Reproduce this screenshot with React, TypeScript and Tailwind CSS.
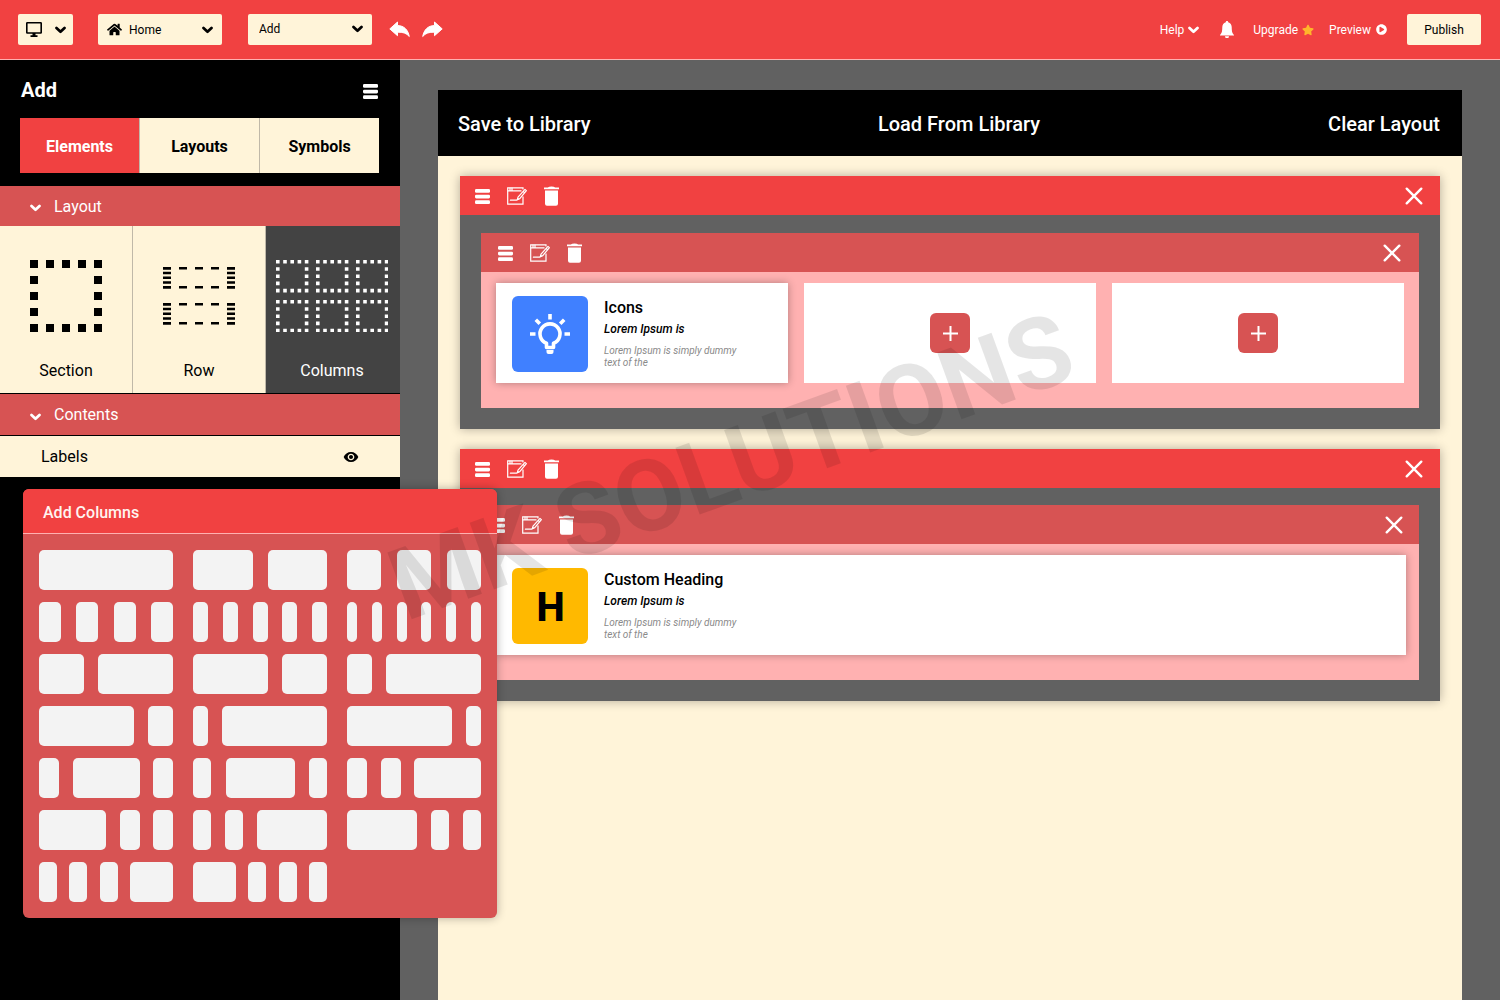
import { useState } from 'react'
import type { ReactNode } from 'react'
import { FaHome, FaPlayCircle, FaStar } from 'react-icons/fa'
import { MdVisibility } from 'react-icons/md'
import { clsx } from 'clsx'

const TABS = ['Elements', 'Layouts', 'Symbols']

// Each preset is a list of block widths, spread over one 134px cell
const COLUMN_PRESETS: number[][] = [
  [134],
  [60, 59],
  [34, 34, 34],
  [22, 22, 22, 22],
  [15, 15, 15, 15, 15],
  [10, 10, 10, 10, 10, 10],
  [45, 75],
  [75, 45],
  [25, 95],
  [95, 25],
  [15, 105],
  [105, 15],
  [20, 67, 20],
  [18, 69, 18],
  [20, 20, 67],
  [67, 20, 20],
  [18, 18, 70],
  [70, 18, 18],
  [18, 18, 18, 43],
  [43, 18, 18, 18],
]

function MenuIcon() {
  return (
    <svg width="15" height="15" viewBox="0 0 15 15" fill="currentColor" aria-hidden="true">
      <rect width="15" height="3.7" rx="1.3" />
      <rect y="5.700" width="15" height="3.7" rx="1.3" />
      <rect y="11.300" width="15" height="3.7" rx="1.3" />
    </svg>
  )
}

function Chevron({ className }: { className?: string }) {
  return (
    <svg width="11" height="8" viewBox="0 0 11 8" fill="none" stroke="currentColor" strokeWidth="2.7" strokeLinecap="round" strokeLinejoin="round" className={className} aria-hidden="true">
      <path d="M1.500 2l4 3.800 4-3.800" />
    </svg>
  )
}

function ReplyIcon({ flip }: { flip?: boolean }) {
  return (
    <svg width="21" height="17" viewBox="0 0 21 17" fill="currentColor" stroke="currentColor" strokeLinejoin="round" className={clsx(flip && '-scale-x-100')} aria-hidden="true">
      <path d="M8.500 1v3.500c6.500.2 10.500 4.200 11.800 11-2.800-3.400-6.500-4.500-11.800-4.300v3.500L.8 7.900z" />
    </svg>
  )
}

function BellIcon() {
  return (
    <svg width="14" height="17" viewBox="0 0 14 17" fill="currentColor" aria-hidden="true">
      <path d="M7 0c.8 0 1.200.5 1.200 1.200C10.500 1.800 11.600 3.700 11.700 6c.1 4.500.4 6 2.300 8v.6H0V14c1.900-2 2.200-3.500 2.300-8 .1-2.300 1.200-4.200 3.500-4.800C5.800.5 6.200 0 7 0zM5 15.300h4A2 2 0 0 1 5 15.300z" />
    </svg>
  )
}

function EditIcon() {
  return (
    <svg width="20" height="18" viewBox="0 0 20 18" fill="none" stroke="currentColor" strokeWidth="1.2" aria-hidden="true">
      <path d="M16 9.500V17.200H.7V.8H16V2.500" />
      <path d="M.7 3.800H14.500M3 .8V3.800M5 .8V3.800" />
      <path d="M18 2.400l1.400 1.200-6.600 8-2.400 1 .6-2.400zM16.200 4.600l1.500 1.200" strokeLinejoin="round" />
      <path d="M3.400 13.200H9.600l1.400-.9" strokeLinecap="round" />
    </svg>
  )
}

function TrashIcon() {
  return (
    <svg width="15" height="20" viewBox="0 0 15 20" fill="currentColor" aria-hidden="true">
      <path d="M0 1.500h3.800Q5 .5 7.500 .5T11.200 1.500H15v1.800H0zM1 4.500h13V17.700a2 2 0 0 1-2 2H3a2 2 0 0 1-2-2z" />
    </svg>
  )
}

function CloseIcon() {
  return (
    <svg width="18" height="18" viewBox="0 0 18 18" fill="none" stroke="currentColor" strokeWidth="2.400" strokeLinecap="round" aria-hidden="true">
      <path d="M1.700 1.700l14.600 14.600M16.300 1.700l-14.600 14.600" />
    </svg>
  )
}

function DesktopIcon() {
  return (
    <svg width="16" height="15" viewBox="0 0 16 15" fill="currentColor" aria-hidden="true">
      <path fillRule="evenodd" d="M1.300 0h13.400A1.300 1.300 0 0 1 16 1.300v9.200a1.300 1.300 0 0 1-1.300 1.300H9.500v1.500h2V15h-7v-1.700h2v-1.500H1.300A1.300 1.300 0 0 1 0 10.500V1.300A1.300 1.300 0 0 1 1.300 0zM1.600 1.500v8.800h12.800V1.500z" />
    </svg>
  )
}

function BulbIcon() {
  return (
    <svg width="40" height="40" viewBox="0 0 40 40" fill="none" stroke="currentColor" strokeWidth="3.6" aria-hidden="true">
      <path d="M16.500 33.500v-4.300a10 10 0 1 1 7 0v4.300z" strokeLinejoin="round" />
      <path d="M20 0v5.500M0 20h5.500M34.500 20H40M5.800 5.800l4 4M34.200 5.800l-4 4" />
      <path d="M16.500 36h7v2a2 2 0 0 1-2 2h-3a2 2 0 0 1-2-2z" fill="currentColor" stroke="none" />
    </svg>
  )
}

function SectionGlyph() {
  return (
    <svg width="72" height="72" viewBox="0 0 72 72" stroke="currentColor" strokeWidth="8" strokeDasharray="8 8" fill="none" aria-hidden="true">
      <path d="M0 4H72M0 68H72M4 0V72M68 0V72" />
    </svg>
  )
}

function RowGlyph() {
  return (
    <svg width="72" height="58" viewBox="0 0 72 58" stroke="currentColor" fill="none" aria-hidden="true">
      {[0, 36].map((y) => (
        <g key={y} transform={`translate(0 ${y})`}>
          <path d="M0 1.200H72M0 20.200H72" strokeWidth="2.400" strokeDasharray="8 8" />
          <path d="M4 0V21.400M68 0V21.400" strokeWidth="8" strokeDasharray="2.400 2.350" />
        </g>
      ))}
    </svg>
  )
}

function ColumnsGlyph() {
  return (
    <svg width="112" height="72" viewBox="0 0 112 72" stroke="currentColor" strokeWidth="3.600" strokeDasharray="3.600 3.600" fill="none" aria-hidden="true">
      {[0, 40].map((y) =>
        [0, 40, 80].map((x) => (
          <path
            key={`${x}-${y}`}
            transform={`translate(${x} ${y})`}
            d="M0 1.800H32.400M0 30.600H32.400M1.800 0V32.400M30.600 0V32.400"
          />
        )),
      )}
    </svg>
  )
}

function TopBar() {
  const select =
    'h-full w-full appearance-none rounded-xs bg-[#fff4d9] text-xs text-black focus:outline-none'

  return (
    <header className="flex h-15 items-center justify-between border-b border-[#ffb0b0] bg-[#f14141] pl-[18px] pr-[19px] text-white">
      <div className="flex items-center">
        <button
          type="button"
          aria-label="Device"
          className="flex h-[31px] w-[55px] items-center justify-between rounded-xs bg-[#fff4d9] pl-2 pr-[7px] text-black"
        >
          <DesktopIcon />
          <Chevron />
        </button>

        <div className="relative ml-[25px] h-[31px] w-[124px] text-black">
          <select aria-label="Page" className={clsx(select, 'pl-[31px]')}>
            <option>Home</option>
          </select>
          <FaHome size={15} className="pointer-events-none absolute left-[9px] top-2" />
          <Chevron className="pointer-events-none absolute right-[9px] top-3" />
        </div>

        <div className="relative ml-[26px] h-[31px] w-[124px] text-black">
          <select aria-label="Add item" className={clsx(select, 'pb-[2px] pl-[11px]')}>
            <option>Add</option>
          </select>
          <Chevron className="pointer-events-none absolute right-[9px] top-[11px]" />
        </div>

        <button type="button" aria-label="Undo" className="ml-[17px]">
          <ReplyIcon />
        </button>
        <button type="button" aria-label="Redo" className="ml-3">
          <ReplyIcon flip />
        </button>
      </div>

      <div className="flex items-center text-xs">
        <button type="button" className="flex items-center gap-1">
          Help
          <Chevron />
        </button>
        <button type="button" aria-label="Notifications" className="ml-[21px]">
          <BellIcon />
        </button>
        <a href="#upgrade" className="ml-[19px] flex items-center gap-1">
          Upgrade
          <FaStar size={12} className="text-[#ffb52b]" />
        </a>
        <a href="#preview" className="ml-[15px] flex items-center gap-[5px]">
          Preview
          <FaPlayCircle size={11} />
        </a>
        <button
          type="button"
          className="ml-5 h-[31px] w-[74px] rounded-xs bg-[#fff4d9] text-black"
        >
          Publish
        </button>
      </div>
    </header>
  )
}

function GroupHeader({ title, className }: { title: string; className?: string }) {
  return (
    <button
      type="button"
      className={clsx('flex w-full items-center bg-[#d75353] pl-[30px] pt-px text-white', className)}
    >
      <Chevron className="mt-[3px]" />
      <span className="ml-[13px]">{title}</span>
    </button>
  )
}

function ElementTile({ label, active, children }: { label: string; active?: boolean; children: ReactNode }) {
  return (
    <button
      type="button"
      className={clsx(
        'flex flex-col items-center',
        active
          ? 'flex-1 bg-[#434343] pr-[2px] text-white'
          : 'w-[133px] border-r border-[#c0b8a8] bg-[#fff4d9] text-black',
      )}
    >
      <span className="mt-[34px] flex h-[72px] items-center">{children}</span>
      <span className="mt-[27px]">{label}</span>
    </button>
  )
}

function Sidebar() {
  const [tab, setTab] = useState('Elements')

  return (
    <aside className="w-[400px] shrink-0 bg-black">
      <div className="flex items-center justify-between pl-[21px] pr-[22px] pt-4 text-white">
        <h2 className="text-xl font-bold">Add</h2>
        <button type="button" aria-label="Panel menu" className="pt-[2px]">
          <MenuIcon />
        </button>
      </div>

      <div role="tablist" className="ml-5 mr-[21px] mt-[14px] flex h-[55px]">
        {TABS.map((name) => (
          <button
            key={name}
            type="button"
            role="tab"
            aria-selected={tab === name}
            onClick={() => setTab(name)}
            className={clsx(
              'flex-1 border-r border-[#c0b8a8] pt-[2px] font-bold last:border-r-0',
              tab === name ? 'bg-[#f14141] text-white' : 'bg-[#fff4d9] text-black',
            )}
          >
            {name}
          </button>
        ))}
      </div>

      <div className="mt-[13px]">
        <GroupHeader title="Layout" className="h-10" />
        <div className="flex h-[167px]">
          <ElementTile label="Section">
            <SectionGlyph />
          </ElementTile>
          <ElementTile label="Row">
            <RowGlyph />
          </ElementTile>
          <ElementTile label="Columns" active>
            <ColumnsGlyph />
          </ElementTile>
        </div>
      </div>

      <div className="mt-px">
        <GroupHeader title="Contents" className="h-[41px]" />
        <div className="mt-px flex h-[41px] items-center justify-between bg-[#fff4d9] px-[41px] text-black">
          <span>Labels</span>
          <button type="button" aria-label="Toggle labels">
            <MdVisibility size={16} />
          </button>
        </div>
      </div>
    </aside>
  )
}

function BlockToolbar({ className }: { className?: string }) {
  return (
    <div className={clsx('flex h-[39px] items-center justify-between text-white', className)}>
      <div className="flex items-center pt-px">
        <button type="button" aria-label="Block menu">
          <MenuIcon />
        </button>
        <button type="button" aria-label="Edit block" className="ml-[17px]">
          <EditIcon />
        </button>
        <button type="button" aria-label="Delete block" className="ml-[17px]">
          <TrashIcon />
        </button>
      </div>
      <button type="button" aria-label="Close block">
        <CloseIcon />
      </button>
    </div>
  )
}

function ContentCard({ title, tile, tileClass }: { title: string; tile: ReactNode; tileClass: string }) {
  return (
    <article className="flex h-[100px] gap-4 bg-white px-4 pt-[13px] shadow-[0_0_8px_rgba(0,0,0,0.3)]">
      <div className={clsx('flex size-[76px] shrink-0 items-center justify-center rounded-md', tileClass)}>
        {tile}
      </div>
      <div>
        <h3 className="text-base font-medium text-black">{title}</h3>
        <p className="text-xs leading-[18px] font-medium text-black italic">Lorem Ipsum is</p>
        <p className="mt-[7px] w-[150px] text-[10px] leading-3 text-[#8a8a8a] italic">
          Lorem Ipsum is simply dummy text of the
        </p>
      </div>
    </article>
  )
}

function EmptyColumn() {
  return (
    <div className="flex h-[100px] items-center justify-center bg-white">
      <button
        type="button"
        aria-label="Add element"
        className="flex size-10 items-center justify-center rounded-md bg-[#d75353] pl-px text-white"
      >
        <svg width="15" height="15" viewBox="0 0 15 15" stroke="currentColor" strokeWidth="2" aria-hidden="true">
          <path d="M7.500 0v15M0 7.500h15" />
        </svg>
      </button>
    </div>
  )
}

function Canvas() {
  const action = 'text-xl font-medium'
  const block = 'bg-[#616161] shadow-[0_0_10px_rgba(0,0,0,0.3)]'

  return (
    <main className="flex flex-1 flex-col bg-[#616161] px-[38px] pt-[30px]">
      <div className="grid h-[66px] grid-cols-3 items-center bg-black pl-5 pr-[22px] pt-[2px] text-white">
        <button type="button" className={clsx(action, 'justify-self-start')}>Save to Library</button>
        <button type="button" className={clsx(action, 'ml-5 justify-self-center')}>Load From Library</button>
        <button type="button" className={clsx(action, 'justify-self-end')}>Clear Layout</button>
      </div>

      <div className="flex flex-1 flex-col gap-5 bg-[#fff4d9] px-[22px] py-5">
        <section className={block}>
          <BlockToolbar className="bg-[#f14141] pl-[15px] pr-[17px]" />
          <div className="px-[21px] pb-[21px] pt-[18px]">
            <BlockToolbar className="bg-[#d75353] pl-[17px] pr-[18px]" />
            <div className="grid grid-cols-3 gap-4 bg-[#ffb1b1] px-[15px] pb-[25px] pt-[11px]">
              <ContentCard title="Icons" tile={<BulbIcon />} tileClass="bg-[#4080ff] text-white" />
              <EmptyColumn />
              <EmptyColumn />
            </div>
          </div>
        </section>

        <section className={block}>
          <BlockToolbar className="bg-[#f14141] pl-[15px] pr-[17px]" />
          <div className="px-[21px] pb-[21px] pt-[17px]">
            <BlockToolbar className="bg-[#d75353] pl-[9px] pr-4" />
            <div className="bg-[#ffb1b1] pb-[25px] pl-[15px] pr-[13px] pt-[11px]">
              <ContentCard
                title="Custom Heading"
                tile={<span className="pl-px pt-1 text-[40px] leading-none font-extrabold">H</span>}
                tileClass="bg-[#ffb900] text-black"
              />
            </div>
          </div>
        </section>
      </div>
    </main>
  )
}

function AddColumnsPopover() {
  return (
    <div
      role="dialog"
      aria-label="Add Columns"
      className="absolute left-[23px] top-[489px] w-[474px] overflow-hidden rounded-md bg-[#d75353] shadow-[0_0_10px_rgba(0,0,0,0.3)]"
    >
      <h2 className="flex h-[45px] items-center border-b border-[#ffb0b0] bg-[#f14141] px-5 pt-[3px] text-base font-medium text-[#fff4f0]">
        Add Columns
      </h2>
      <div className="grid grid-cols-3 gap-x-5 gap-y-3 p-4">
        {COLUMN_PRESETS.map((widths, i) => (
          <button
            key={i}
            type="button"
            aria-label={`Column preset ${i + 1}`}
            className="flex h-10 justify-between"
          >
            {widths.map((w, j) => (
              <span key={j} className="h-full rounded-[5px] bg-[#f3f3f3]" style={{ width: w }} />
            ))}
          </button>
        ))}
      </div>
    </div>
  )
}

export default function App() {
  return (
    <div className="relative flex min-h-screen flex-col overflow-hidden font-['Roboto',sans-serif]">
      <TopBar />
      <div className="flex flex-1">
        <Sidebar />
        <Canvas />
      </div>
      <AddColumnsPopover />
      <div className="pointer-events-none absolute left-[731px] top-[467px] -translate-x-1/2 -translate-y-1/2 -rotate-[20deg] text-[100px] leading-none font-bold whitespace-nowrap text-black/10">
        MK SOLUTIONS
      </div>
    </div>
  )
}
